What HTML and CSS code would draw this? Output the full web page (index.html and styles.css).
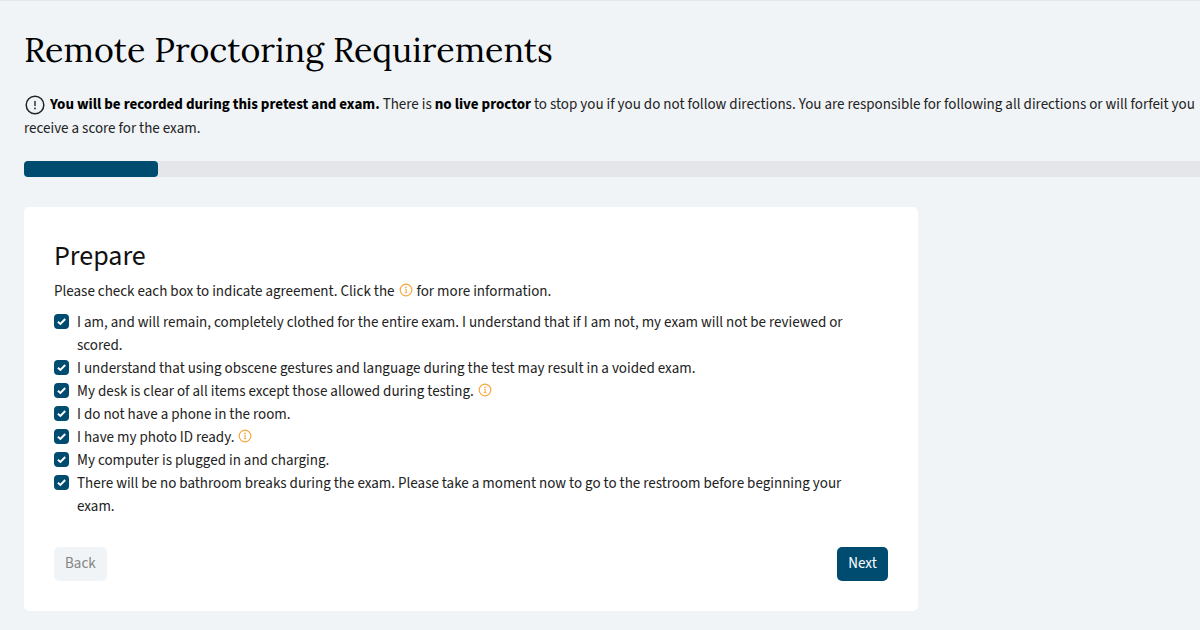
FILE: index.html
```html
<!DOCTYPE html>
<html lang="en">
<head>
    <meta charset="UTF-8">
    <meta name="viewport" content="width=device-width, initial-scale=1.0">
    <title>Remote Proctoring Requirements</title>
    <link rel="stylesheet" href="styles.css">
</head>
<body>
    <svg class="sprite" aria-hidden="true">
        <symbol id="info" viewBox="0 0 14 14">
            <circle cx="7" cy="7" r="5.8" fill="none" stroke="currentColor" stroke-width="1.2"/>
            <path d="M6.2 6.3h1v3.1M5.9 9.6h2.4" fill="none" stroke="currentColor" stroke-width="1"/>
            <circle cx="7" cy="4.4" r="0.8" fill="currentColor"/>
        </symbol>
    </svg>

    <main class="page">
        <h1>Remote Proctoring Requirements</h1>

        <p class="intro">
            <svg class="alert-icon" viewBox="0 0 22 22" aria-hidden="true">
                <circle cx="11" cy="11" r="8.8" fill="none" stroke="currentColor" stroke-width="1.5"/>
                <path d="M11 7.4v4.2" stroke="currentColor" stroke-width="1.4" stroke-linecap="round"/>
                <circle cx="11" cy="14.4" r="0.9" fill="currentColor"/>
            </svg>
            <strong>You will be recorded during this pretest and exam.</strong>
            There is <strong>no live proctor</strong> to stop you if you do not follow directions. You are responsible for following all directions or will forfeit you<br>
            receive a score for the exam.
        </p>

        <div class="progress" role="progressbar" aria-valuemin="0" aria-valuemax="100" aria-valuenow="11">
            <div class="progress-bar" style="width: 11.4%"></div>
        </div>

        <form class="card">
            <h2>Prepare</h2>
            <p>Please check each box to indicate agreement. Click the <svg class="info-icon" aria-hidden="true"><use href="#info"/></svg> for more information.</p>

            <ul class="checklist">
                <li>
                    <input type="checkbox" id="clothed" checked>
                    <label for="clothed">I am, and will remain, completely clothed for the entire exam. I understand that if I am not, my exam will not be reviewed or scored.</label>
                </li>
                <li>
                    <input type="checkbox" id="gestures" checked>
                    <label for="gestures">I understand that using obscene gestures and language during the test may result in a voided exam.</label>
                </li>
                <li>
                    <input type="checkbox" id="desk" checked>
                    <label for="desk">My desk is clear of all items except those allowed during testing. <svg class="info-icon" aria-hidden="true"><use href="#info"/></svg></label>
                </li>
                <li>
                    <input type="checkbox" id="phone" checked>
                    <label for="phone">I do not have a phone in the room.</label>
                </li>
                <li>
                    <input type="checkbox" id="photo-id" checked>
                    <label for="photo-id">I have my photo ID ready. <svg class="info-icon" aria-hidden="true"><use href="#info"/></svg></label>
                </li>
                <li>
                    <input type="checkbox" id="computer" checked>
                    <label for="computer">My computer is plugged in and charging.</label>
                </li>
                <li>
                    <input type="checkbox" id="breaks" checked>
                    <label for="breaks">There will be no bathroom breaks during the exam. Please take a moment now to go to the restroom before beginning your exam.</label>
                </li>
            </ul>

            <div class="actions">
                <button type="button" class="btn btn-back" disabled>Back</button>
                <button type="button" class="btn btn-next">Next</button>
            </div>
        </form>
    </main>
</body>
</html>
```

FILE: styles.css
```css
* {
    box-sizing: border-box;
}
body {
    margin: 0;
    font-family: "Source Sans 3", "Source Sans Pro", "Noto Sans CJK JP", sans-serif;
    font-size: 15px;
    line-height: 23px;
    color: #222;
    background-color: #f0f4f7;
    border-top: 1px solid #e5e7eb;
    overflow-x: hidden;
}
h1, h2, p, ul {
    margin: 0;
    padding: 0;
    font-weight: 400;
}
.sprite {
    display: none;
}
.page {
    padding: 25px 0 19px 24px;
}
h1 {
    font-family: Lora, "Liberation Serif", serif;
    font-size: 34px;
    line-height: 48px;
    color: #000;
}
.intro {
    margin-top: 19px;
    line-height: 24px;
    white-space: nowrap;
}
.intro strong {
    color: #000;
}
.alert-icon {
    width: 22px;
    height: 22px;
    margin: -2px 1px -2px 0;
    vertical-align: middle;
}
.progress {
    margin: 20px 0 30px;
    height: 16px;
    background-color: #e5e6ea;
    border-radius: 4px 0 0 4px;
}
.progress-bar {
    height: 100%;
    background-color: #004b70;
    border-radius: 4px;
}
.card {
    width: 76%;
    padding: 31px 30px 30px;
    background-color: #fff;
    border-radius: 5px;
}
.card h2 {
    margin-bottom: 6px;
    font-size: 28px;
    line-height: 36px;
    color: #111;
}
.checklist {
    margin-top: 8px;
    padding-right: 16px;
    list-style: none;
}
.checklist li {
    display: flex;
    align-items: flex-start;
    gap: 8px;
}
.checklist input {
    appearance: none;
    flex: none;
    width: 15px;
    height: 15px;
    margin: 3px 0 0;
    border-radius: 4px;
    background: #004b70 url("data:image/svg+xml,%3Csvg xmlns='http://www.w3.org/2000/svg' viewBox='0 0 15 15'%3E%3Cpath d='M3.9 7.7l2.5 2.2L11.2 5' fill='none' stroke='white' stroke-width='2'/%3E%3C/svg%3E") center / contain no-repeat;
}
.checklist input:not(:checked) {
    background: #fff;
    border: 1px solid #9ca3af;
}
.info-icon {
    width: 14px;
    height: 14px;
    margin: 0 1px;
    color: #f9a73e;
    vertical-align: -1px;
}
.actions {
    display: flex;
    justify-content: space-between;
    margin-top: 29px;
}
.btn {
    padding: 5px 11px;
    border: none;
    border-radius: 5px;
    font: inherit;
    line-height: 24px;
}
.btn-back {
    background-color: #f0f4f7;
    color: #858585;
}
.btn-next {
    background-color: #004b70;
    color: #fff;
    cursor: pointer;
}
```
